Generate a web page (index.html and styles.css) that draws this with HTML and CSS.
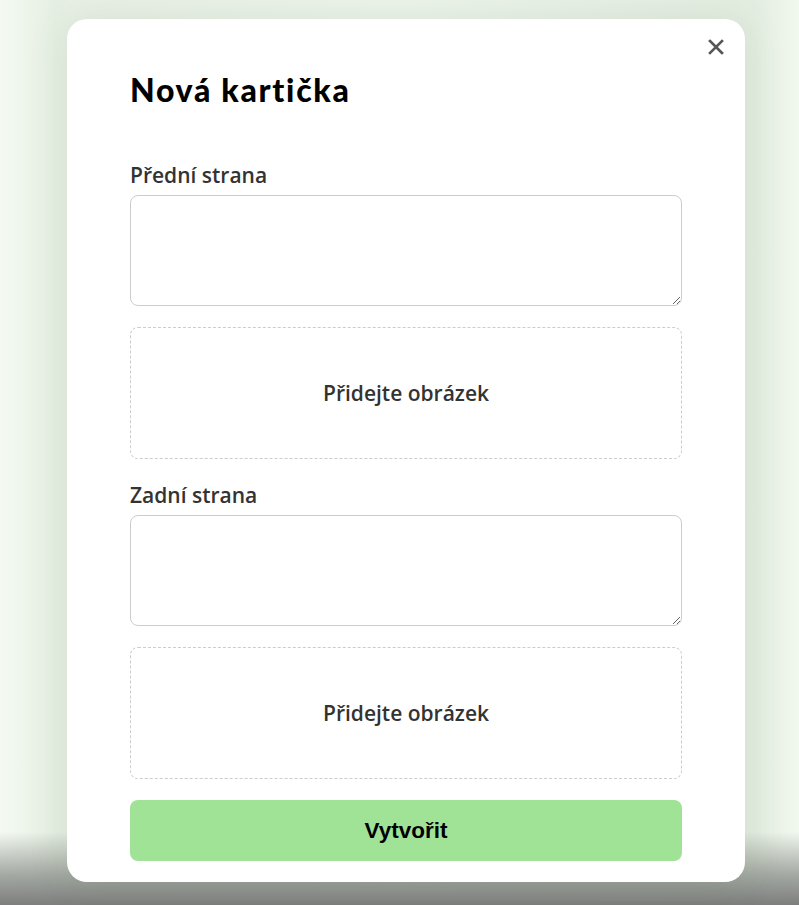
FILE: index.html
```html
<!DOCTYPE html>
<html lang="cs">
<head>
<meta charset="utf-8">
<title>Nová kartička</title>
<link rel="stylesheet" href="styles.css">
</head>
<body>
<div class="backdrop">
  <div class="modal">
    <button class="close" aria-label="Zavřít">
      <svg width="16" height="16" viewBox="0 0 16 16"><path d="M2 2 L14 14 M14 2 L2 14" stroke="#555" stroke-width="2.6" stroke-linecap="square" fill="none"/></svg>
    </button>
    <h1 class="title">Nová kartička</h1>
    <form class="form">
      <div class="field">
        <label class="label">Přední strana</label>
        <textarea class="area"></textarea>
      </div>
      <div class="drop">Přidejte obrázek</div>
      <div class="field">
        <label class="label">Zadní strana</label>
        <textarea class="area"></textarea>
      </div>
      <div class="drop">Přidejte obrázek</div>
      <button type="button" class="submit">Vytvořit</button>
    </form>
  </div>
</div>
</body>
</html>
```

FILE: styles.css
```css
html, body {
  margin: 0;
  padding: 0;
  height: 100%;
}
body {
  background:
    linear-gradient(to bottom, rgba(128,128,128,0) 0, rgba(128,128,128,0) 832px, rgba(150,155,150,0.85) 875px, #7d7e7d 905px),
    linear-gradient(to right, #f4faf2 0, #e6efe3 55px, #e9f0e6 75px, #eef5ec 400px, #e4ede1 755px, #f1f8ef 799px);
  font-family: "Open Sans", "Noto Sans", sans-serif;
  overflow: hidden;
}
.backdrop {
  display: flex;
  justify-content: flex-start;
  padding-top: 19px;
  padding-left: 67px;
}
.modal {
  position: relative;
  box-sizing: border-box;
  width: 678px;
  height: 863px;
  background: #fff;
  border-radius: 20px;
  padding: 0 63px;
  box-shadow: 0 0 40px rgba(60, 100, 50, 0.12);
}
.close {
  position: absolute;
  top: 20px;
  right: 21px;
  width: 16px;
  height: 16px;
  padding: 0;
  border: 0;
  background: none;
  display: flex;
}
.title {
  margin: 0;
  padding-top: 52px;
  font-family: "Lato", "Inter", sans-serif;
  font-weight: 900;
  font-size: 32px;
  line-height: 38px;
  color: #000;
  letter-spacing: 1.7px;
  height: 38px;
  margin-bottom: 51px;
}
.form {
  display: flex;
  flex-direction: column;
  gap: 21px;
}
.field {
  display: flex;
  flex-direction: column;
  gap: 6px;
  padding-top: 2px;
}
.label {
  font-size: 21px;
  line-height: 27px;
  color: #333;
  font-weight: 600;
}
.area {
  box-sizing: border-box;
  width: 552px;
  height: 111px;
  border: 1px solid #ccc;
  border-radius: 8px;
  resize: vertical;
  font-family: inherit;
  margin: 0;
}
.drop {
  box-sizing: border-box;
  height: 132px;
  border: 1px dashed #ccc;
  border-radius: 8px;
  display: flex;
  align-items: center;
  justify-content: center;
  font-size: 21px;
  color: #333;
  font-weight: 600;
}
.submit {
  height: 61px;
  border: 0;
  border-radius: 8px;
  background: #a0e296;
  font-family: "Liberation Sans", Arial, sans-serif;
  font-weight: 700;
  font-size: 22.5px;
  color: #000;
}
```
